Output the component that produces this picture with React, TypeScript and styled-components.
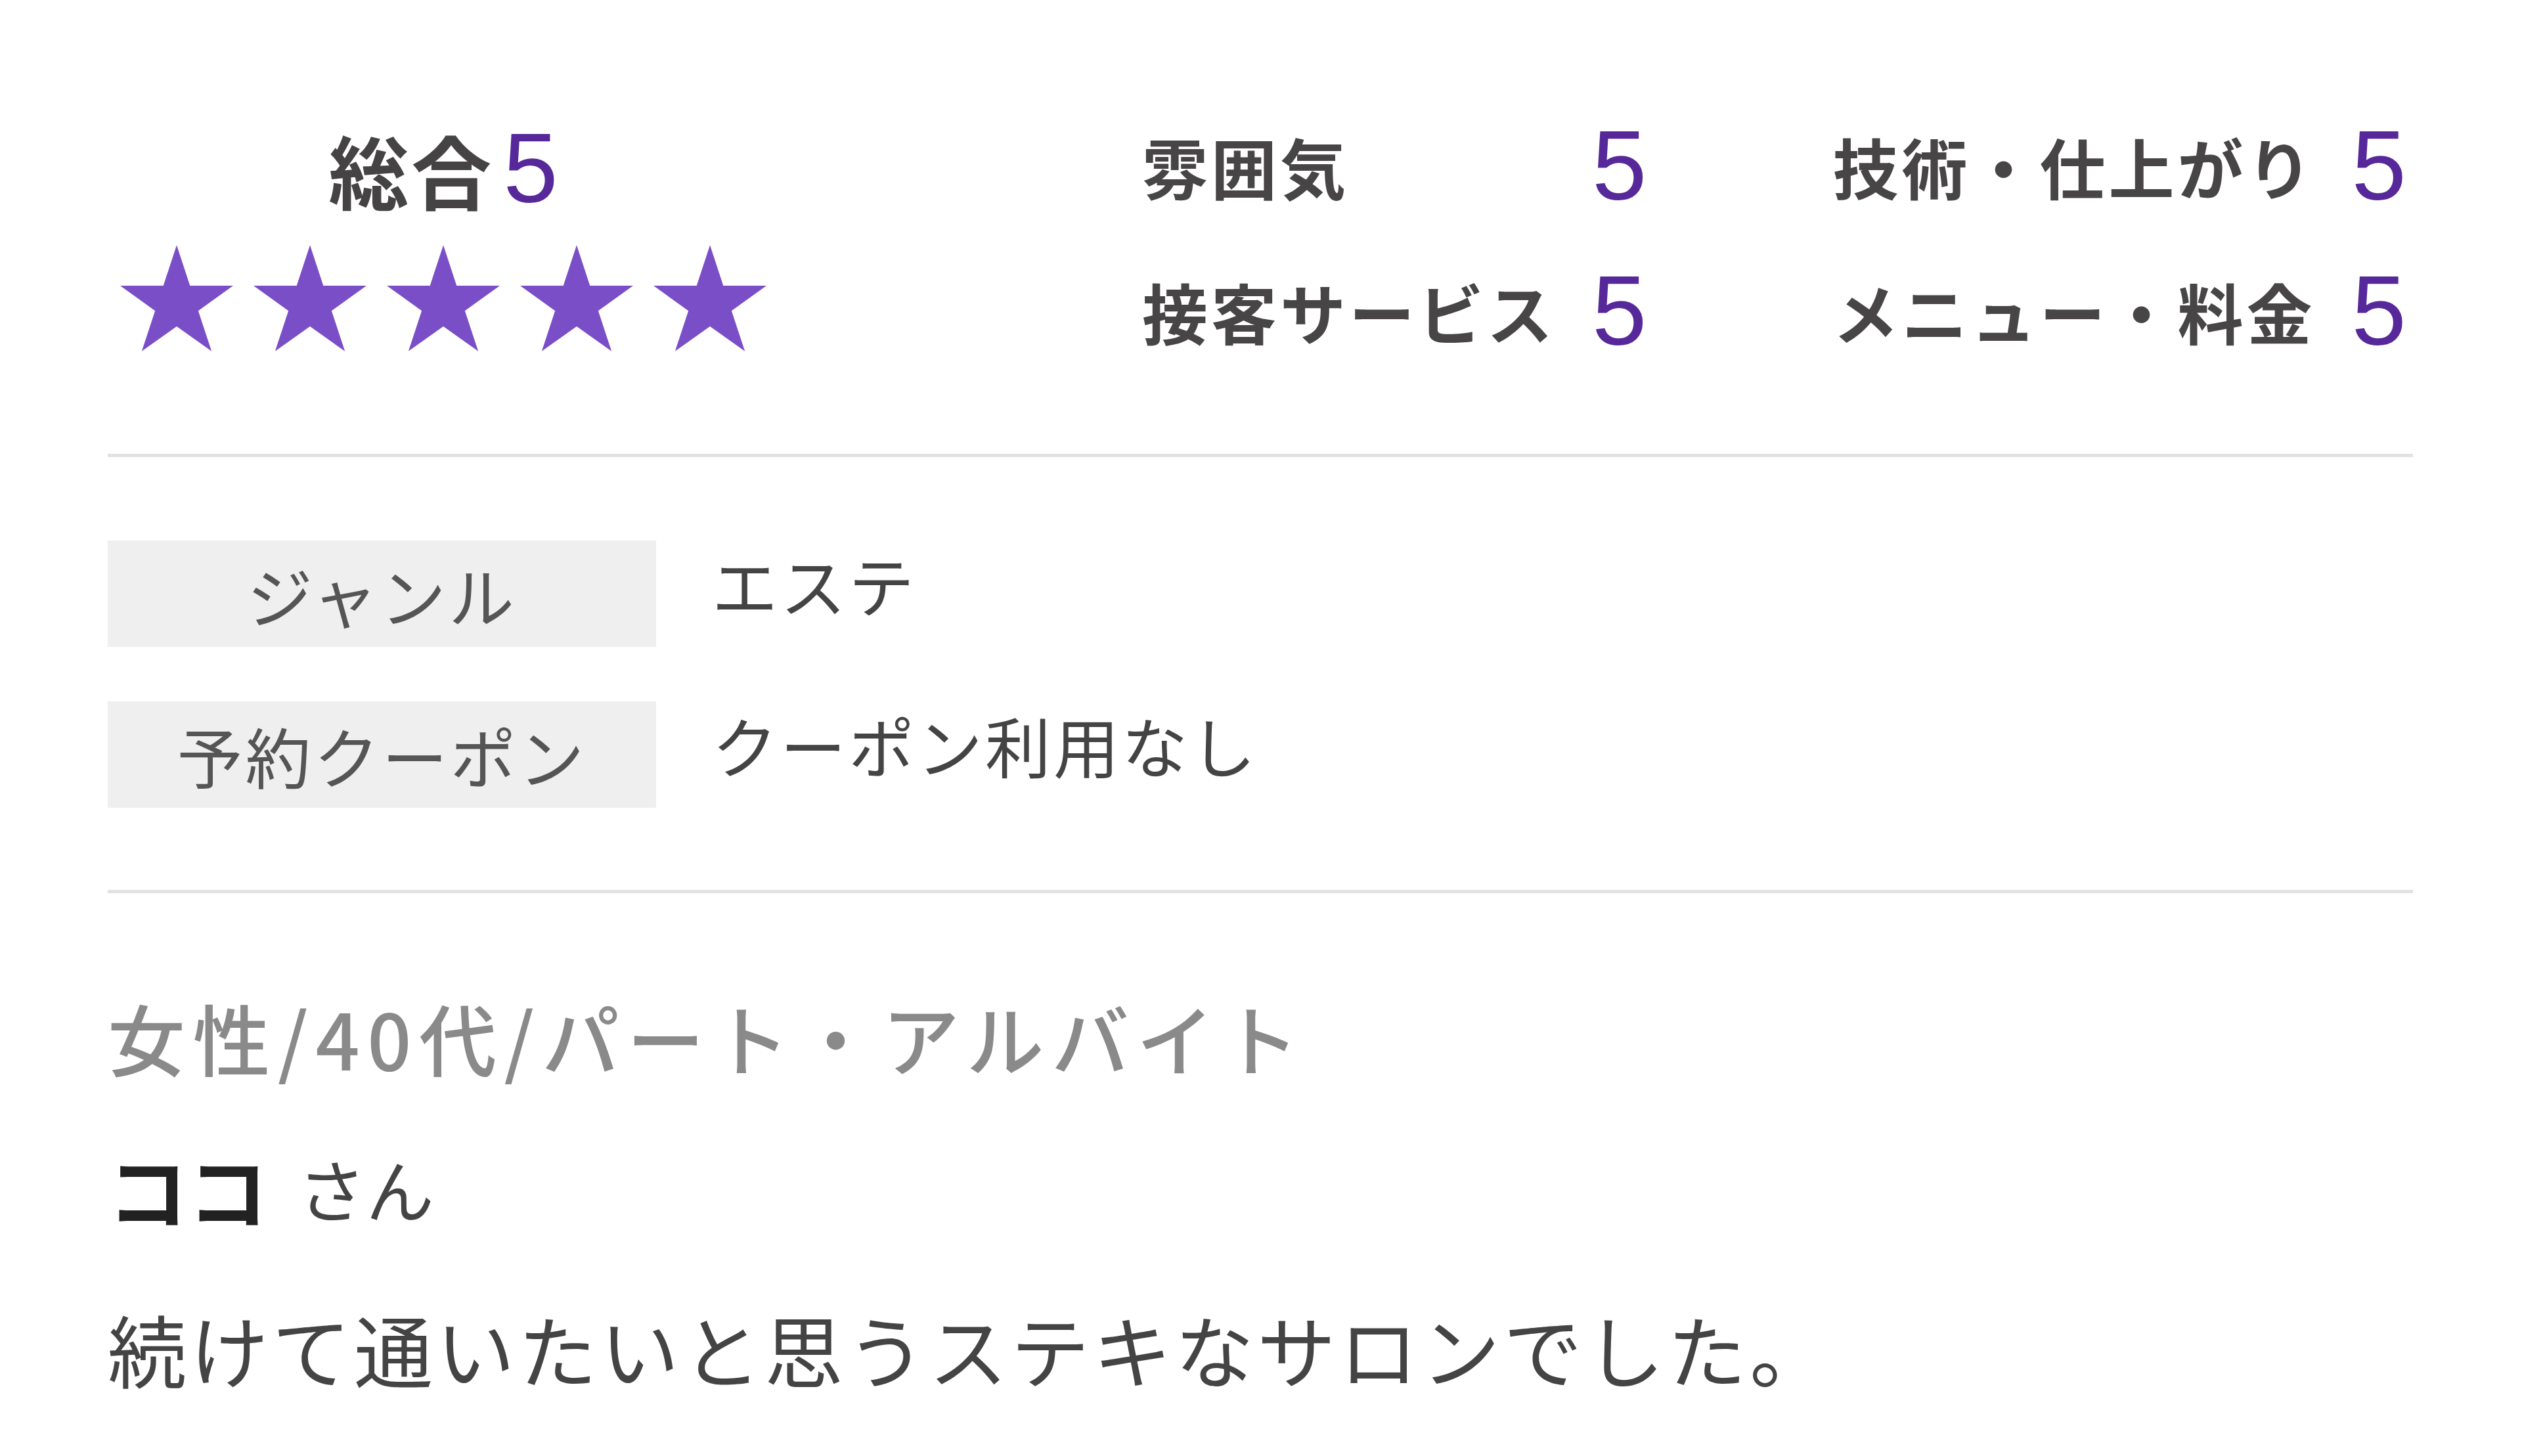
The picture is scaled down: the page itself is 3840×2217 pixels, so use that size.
import React from "react";
import styled, { createGlobalStyle } from "styled-components";

const GlobalStyle = createGlobalStyle`
  html, body {
    margin: 0;
    padding: 0;
    background: #ffffff;
  }
  body {
    font-family: "Noto Sans CJK JP", "Noto Sans", sans-serif;
    color: #444;
  }
  * { box-sizing: border-box; }
`;

const Page = styled.div`
  width: 3840px;
  height: 2217px;
  padding: 177px 166px 0 164px;
  background: #fff;
  overflow: hidden;
`;

const TopSection = styled.section`
  display: flex;
  align-items: flex-start;
  gap: 553px;
  padding-bottom: 143px;
`;

const Overall = styled.div`
  width: 1022px;
  display: flex;
  flex-direction: column;
  align-items: center;
  padding-top: 4px;
`;

const OverallTitle = styled.div`
  display: flex;
  align-items: center;
  height: 150px;
  font-size: 122px;
  font-weight: 700;
  letter-spacing: 4px;
  color: #454343;
`;

const Score = styled.span<{ $gap?: number }>`
  font-family: "Liberation Sans", Arial, sans-serif;
  font-size: 150px;
  font-weight: 400;
  letter-spacing: 0;
  color: #56289a;
  margin-left: ${(p) => p.$gap ?? 0}px;
  line-height: 150px;
`;

const Stars = styled.div`
  display: flex;
  gap: 31px;
  margin-top: 42px;
`;

const StarIcon = styled.svg`
  width: 172px;
  height: 162px;
  display: block;
`;

const Ratings = styled.div`
  display: flex;
  gap: 283px;
`;

const RatingColumn = styled.div`
  display: grid;
  grid-template-columns: auto auto;
  column-gap: 55px;
  row-gap: 71px;
`;

const RatingLabel = styled.div`
  height: 150px;
  display: flex;
  align-items: center;
  font-size: 100px;
  font-weight: 700;
  letter-spacing: 5px;
  color: #474545;
  white-space: nowrap;
`;

const RatingValue = styled.div`
  height: 150px;
  display: flex;
  align-items: center;
`;

const Divider = styled.hr`
  border: none;
  margin: 0;
  height: 5px;
  background: #e2e2e2;
`;

const InfoList = styled.dl`
  margin: 0;
  padding: 127px 0 125px;
  display: flex;
  flex-direction: column;
  gap: 83px;
`;

const InfoRow = styled.div`
  display: flex;
  align-items: flex-start;
`;

const InfoLabel = styled.dt`
  width: 835px;
  height: 162px;
  background: #efefef;
  display: flex;
  align-items: center;
  justify-content: center;
  font-size: 100px;
  font-weight: 400;
  letter-spacing: 4px;
  color: #555;
`;

const InfoValue = styled.dd`
  margin: 0 0 0 85px;
  height: 130px;
  display: flex;
  align-items: center;
  font-size: 100px;
  letter-spacing: 4px;
  color: #444;
`;

const Reviewer = styled.section`
  padding-top: 138px;
`;

const Demographic = styled.div`
  height: 160px;
  display: flex;
  align-items: center;
  font-size: 118px;
  font-weight: 500;
  color: #8a8a8a;
  letter-spacing: 11.5px;
`;

const NameLine = styled.div`
  height: 160px;
  margin-top: 70px;
  display: flex;
  align-items: center;
  gap: 45px;
`;

const Name = styled.span`
  font-size: 122px;
  font-weight: 700;
  color: #222;
`;

const Honorific = styled.span`
  font-size: 104px;
  font-weight: 400;
  color: #444;
`;

const Body = styled.p`
  margin: 85px 0 0;
  height: 160px;
  display: flex;
  align-items: center;
  font-size: 120px;
  letter-spacing: 5px;
  color: #444;
`;

const Star = () => (
  <StarIcon viewBox="0 0 100 94">
    <polygon
      fill="#7a4ec6"
      points="50,0 61.8,36 100,36 69.1,58.2 80.9,94 50,72 19.1,94 30.9,58.2 0,36 38.2,36"
    />
  </StarIcon>
);

const ratingCols = [
  [
    ["雰囲気", 5],
    ["接客サービス", 5],
  ],
  [
    ["技術・仕上がり", 5],
    ["メニュー・料金", 5],
  ],
] as const;

const info = [
  ["ジャンル", "エステ"],
  ["予約クーポン", "クーポン利用なし"],
];

export default function App() {
  return (
    <>
      <GlobalStyle />
      <Page>
        <TopSection>
          <Overall>
            <OverallTitle>
              総合<Score $gap={14}>5</Score>
            </OverallTitle>
            <Stars>
              {[0, 1, 2, 3, 4].map((i) => (
                <Star key={i} />
              ))}
            </Stars>
          </Overall>
          <Ratings>
            {ratingCols.map((col, ci) => (
              <RatingColumn key={ci}>
                {col.map(([label, val]) => (
                  <React.Fragment key={label}>
                    <RatingLabel>{label}</RatingLabel>
                    <RatingValue>
                      <Score>{val}</Score>
                    </RatingValue>
                  </React.Fragment>
                ))}
              </RatingColumn>
            ))}
          </Ratings>
        </TopSection>
        <Divider />
        <InfoList>
          {info.map(([k, v]) => (
            <InfoRow key={k}>
              <InfoLabel>{k}</InfoLabel>
              <InfoValue>{v}</InfoValue>
            </InfoRow>
          ))}
        </InfoList>
        <Divider />
        <Reviewer>
          <Demographic>女性/40代/パート・アルバイト</Demographic>
          <NameLine>
            <Name>ココ</Name>
            <Honorific>さん</Honorific>
          </NameLine>
          <Body>続けて通いたいと思うステキなサロンでした。</Body>
        </Reviewer>
      </Page>
    </>
  );
}
